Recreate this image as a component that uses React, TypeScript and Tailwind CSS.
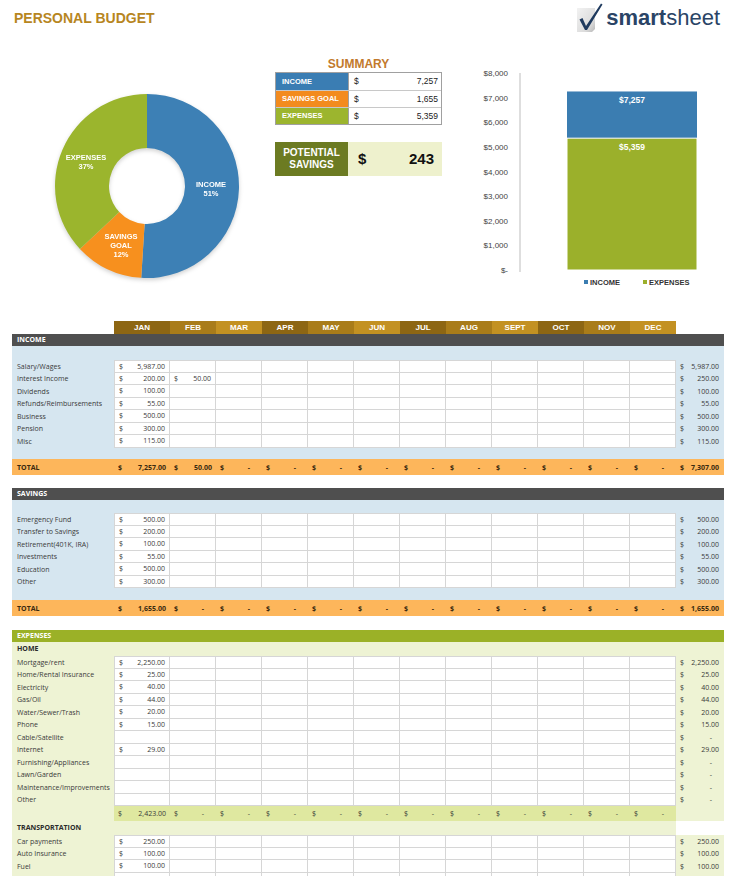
import React from "react";

type Row = [string, string | null, string | null, string | null];

const MONTHS = ["JAN", "FEB", "MAR", "APR", "MAY", "JUN", "JUL", "AUG", "SEPT", "OCT", "NOV", "DEC"];
const MONTH_BG = [
  "bg-[#8d6613]", "bg-[#a97c1a]", "bg-[#c39122]",
  "bg-[#8d6613]", "bg-[#a97c1a]", "bg-[#c39122]",
  "bg-[#8d6613]", "bg-[#a97c1a]", "bg-[#c39122]",
  "bg-[#8d6613]", "bg-[#a97c1a]", "bg-[#c39122]",
];

const GRID = "grid grid-cols-[102px_56px_repeat(11,46px)_48px]";

const income: Row[] = [
  ["Salary/Wages", "5,987.00", null, "5,987.00"],
  ["Interest Income", "200.00", "50.00", "250.00"],
  ["Dividends", "100.00", null, "100.00"],
  ["Refunds/Reimbursements", "55.00", null, "55.00"],
  ["Business", "500.00", null, "500.00"],
  ["Pension", "300.00", null, "300.00"],
  ["Misc", "115.00", null, "115.00"],
];

const savings: Row[] = [
  ["Emergency Fund", "500.00", null, "500.00"],
  ["Transfer to Savings", "200.00", null, "200.00"],
  ["Retirement(401K, IRA)", "100.00", null, "100.00"],
  ["Investments", "55.00", null, "55.00"],
  ["Education", "500.00", null, "500.00"],
  ["Other", "300.00", null, "300.00"],
];

const home: Row[] = [
  ["Mortgage/rent", "2,250.00", null, "2,250.00"],
  ["Home/Rental Insurance", "25.00", null, "25.00"],
  ["Electricity", "40.00", null, "40.00"],
  ["Gas/Oil", "44.00", null, "44.00"],
  ["Water/Sewer/Trash", "20.00", null, "20.00"],
  ["Phone", "15.00", null, "15.00"],
  ["Cable/Satellite", null, null, "-"],
  ["Internet", "29.00", null, "29.00"],
  ["Furnishing/Appliances", null, null, "-"],
  ["Lawn/Garden", null, null, "-"],
  ["Maintenance/Improvements", null, null, "-"],
  ["Other", null, null, "-"],
];

const transport: Row[] = [
  ["Car payments", "250.00", null, "250.00"],
  ["Auto Insurance", "100.00", null, "100.00"],
  ["Fuel", "100.00", null, "100.00"],
  ["", null, null, null],
];

function Money({ v, right }: { v: string; right?: boolean }) {
  const pr = v === "-" ? "pr-[12px]" : right ? "pr-[5px]" : "pr-[4px]";
  return (
    <div className={`flex h-full items-center justify-between pl-[4px] ${pr}`}>
      <span>$</span>
      <span>{v}</span>
    </div>
  );
}

function DataRow({ row, first, totalBg }: { row: Row; first?: boolean; totalBg?: string }) {
  const [label, jan, feb, total] = row;
  const vals = [jan, feb, null, null, null, null, null, null, null, null, null, null];
  return (
    <div className={`${GRID} h-[12.5px] text-[7px] leading-none text-[#3a3a3a]`}>
      <div className="flex items-center whitespace-nowrap pl-[5px]">{label}</div>
      {vals.map((v, i) => (
        <div
          key={i}
          className={`border-b border-r border-[#d6d6d6] bg-white ${first ? "border-t" : ""} ${i === 0 ? "border-l" : ""}`}
        >
          {v && <Money v={v} />}
        </div>
      ))}
      <div className={totalBg ?? ""}>{total && <Money v={total} right />}</div>
    </div>
  );
}

function TotalRow({ jan, feb, total }: { jan: string; feb: string; total: string }) {
  const vals = [jan, feb, "-", "-", "-", "-", "-", "-", "-", "-", "-", "-"];
  return (
    <div className={`${GRID} h-[16px] bg-[#fdb65b] text-[7px] font-bold leading-none text-[#3a2a10]`}>
      <div className="flex items-center pl-[5px]">TOTAL</div>
      {vals.map((v, i) => (
        <Money key={i} v={v} />
      ))}
      <Money v={total} right />
    </div>
  );
}

function SectionBar({ title, bg }: { title: string; bg: string }) {
  return (
    <div className={`flex h-[12px] items-center pl-[5px] text-[7px] font-bold text-white ${bg}`}>{title}</div>
  );
}

function arcPath(cx: number, cy: number, r: number, ri: number, a0: number, a1: number) {
  const rad = (a: number) => ((a - 90) * Math.PI) / 180;
  const p = (rr: number, a: number) => [cx + rr * Math.cos(rad(a)), cy + rr * Math.sin(rad(a))];
  const [x0, y0] = p(r, a0);
  const [x1, y1] = p(r, a1);
  const [x2, y2] = p(ri, a1);
  const [x3, y3] = p(ri, a0);
  const large = a1 - a0 > 180 ? 1 : 0;
  return `M${x0} ${y0} A${r} ${r} 0 ${large} 1 ${x1} ${y1} L${x2} ${y2} A${ri} ${ri} 0 ${large} 0 ${x3} ${y3} Z`;
}

function Donut() {
  return (
    <svg width="196" height="196" viewBox="0 0 196 196" className="drop-shadow-[0_2px_2px_rgba(0,0,0,0.18)]">
      <path d={arcPath(98, 98, 92, 38, 0, 183.6)} fill="#3d80b5" />
      <path d={arcPath(98, 98, 92, 38, 183.6, 226.8)} fill="#f7901e" />
      <path d={arcPath(98, 98, 92, 38, 226.8, 360)} fill="#9bb52d" />
      <g fill="#fff" fontSize="7.5" fontWeight="700" textAnchor="middle" fontFamily="Liberation Sans, Arial, sans-serif">
        <text x="37" y="72">EXPENSES</text>
        <text x="37" y="81">37%</text>
        <text x="162" y="99">INCOME</text>
        <text x="162" y="108">51%</text>
        <text x="72" y="151">SAVINGS</text>
        <text x="72" y="160">GOAL</text>
        <text x="72" y="169">12%</text>
      </g>
    </svg>
  );
}

function BarChart() {
  const y = (v: number) => 210 - v * 0.0246;
  const ticks = [8000, 7000, 6000, 5000, 4000, 3000, 2000, 1000, 0];
  return (
    <svg width="266" height="235" viewBox="0 0 266 235" fontFamily="Liberation Sans, Arial, sans-serif">
      <g fontSize="8" fill="#444" textAnchor="end">
        {ticks.map((t) => (
          <text key={t} x="38" y={y(t) + 3}>
            {t === 0 ? "$-" : `$${t.toLocaleString("en-US")}`}
          </text>
        ))}
      </g>
      <line x1="50" y1="13" x2="50" y2="212" stroke="#bdbdbd" strokeWidth="1" />
      <rect x="97" y={y(7257)} width="130" height={210 - y(7257)} fill="#3b7db1" />
      <rect x="97" y={y(5359)} width="130" height={210 - y(5359)} fill="#9bb02b" stroke="#fff" strokeWidth="1" />
      <g fill="#fff" fontSize="8.5" fontWeight="700" textAnchor="middle">
        <text x="162" y="43">$7,257</text>
        <text x="162" y="90">$5,359</text>
      </g>
      <rect x="114" y="220" width="4" height="4" fill="#3b7db1" />
      <text x="120" y="225" fontSize="7.5" fontWeight="700" fill="#333">INCOME</text>
      <rect x="173" y="220" width="4" height="4" fill="#9bb02b" />
      <text x="179" y="225" fontSize="7.5" fontWeight="700" fill="#333">EXPENSES</text>
    </svg>
  );
}

function Logo() {
  return (
    <div className="flex items-center gap-[2px]">
      <svg width="28" height="32" viewBox="0 0 28 32">
        <defs>
          <linearGradient id="lg" x1="0" y1="0" x2="1" y2="1">
            <stop offset="0" stopColor="#f2f2f2" />
            <stop offset="0.7" stopColor="#dcdcdc" />
            <stop offset="1" stopColor="#b8b8b8" />
          </linearGradient>
        </defs>
        <path d="M1 6 H19 V27 L16 30 H1 Z" fill="url(#lg)" />
        <path d="M3.5 17.5 L6.5 16 L10 24 L25 1.5 L26.5 2.5 L11 28 L9 28 Z" fill="#1f3a5e" />
      </svg>
      <div className="font-['Liberation_Sans',Arial,sans-serif] text-[22px] leading-none text-[#2a4466]">
        <span className="font-bold">smart</span>
        <span>sheet</span>
      </div>
    </div>
  );
}

function Summary() {
  const rows = [
    ["INCOME", "7,257", "bg-[#3a7db3]"],
    ["SAVINGS GOAL", "1,655", "bg-[#f38b1e]"],
    ["EXPENSES", "5,359", "bg-[#9cb52e]"],
  ];
  return (
    <div className="mt-[5px] w-[167px] font-['Liberation_Sans',Arial,sans-serif]">
      <div className="text-center text-[12px] font-bold leading-[15px] text-[#c27a2c]">SUMMARY</div>
      <div className="border border-[#a0a0a0]">
        {rows.map(([label, val, bg], i) => (
          <div key={label} className={`grid h-[17px] grid-cols-[72px_1fr] ${i > 0 ? "border-t border-[#c8c8c8]" : ""}`}>
            <div className={`flex items-center pl-[6px] text-[7.5px] font-bold text-white ${bg}`}>{label}</div>
            <div className="flex items-center justify-between border-l border-[#a0a0a0] bg-white pl-[5px] pr-[3px] text-[8.5px] text-[#222]">
              <span>$</span>
              <span>{val}</span>
            </div>
          </div>
        ))}
      </div>
      <div className="mt-[17px] grid h-[34px] grid-cols-[73px_1fr]">
        <div className="flex items-center justify-center bg-[#6c7b22] text-center text-[10px] font-bold leading-[12px] text-white">
          POTENTIAL
          <br />
          SAVINGS
        </div>
        <div className="flex items-center justify-between bg-[#eef1cd] pl-[10px] pr-[8px] text-[15px] font-bold text-[#111]">
          <span>$</span>
          <span>243</span>
        </div>
      </div>
    </div>
  );
}

export default function App() {
  return (
    <div className="relative h-[876px] w-[736px] overflow-hidden bg-white font-['Open_Sans',Arial,sans-serif]">
      {/* header */}
      <div className="flex h-[40px] items-start justify-between">
        <div className="pl-[14px] pt-[11px] font-['Liberation_Sans',Arial,sans-serif] text-[14px] font-bold leading-none text-[#b7861f]">
          PERSONAL BUDGET
        </div>
        <div className="pr-[16px] pt-[2px]">
          <Logo />
        </div>
      </div>

      {/* charts + summary */}
      <div className="flex h-[281px] items-start">
        <div className="ml-[49px] mt-[48px]">
          <Donut />
        </div>
        <div className="ml-[30px] mt-[12px]">
          <Summary />
        </div>
        <div className="ml-[28px] mt-[20px]">
          <BarChart />
        </div>
      </div>

      {/* table */}
      <div className="ml-[12px] w-[712px]">
        <div className={`${GRID} h-[13px]`}>
          <div />
          {MONTHS.map((m, i) => (
            <div
              key={m}
              className={`flex items-center justify-center font-['Liberation_Sans',Arial,sans-serif] text-[8px] font-bold text-white ${MONTH_BG[i]}`}
            >
              {m}
            </div>
          ))}
          <div />
        </div>

        <SectionBar title="INCOME" bg="bg-[#4f4f4f]" />
        <div className="bg-[#d6e6f0] pb-[11.5px] pt-[14px]">
          {income.map((r, i) => (
            <DataRow key={r[0]} row={r} first={i === 0} />
          ))}
        </div>
        <TotalRow jan="7,257.00" feb="50.00" total="7,307.00" />

        <div className="mt-[13px]">
          <SectionBar title="SAVINGS" bg="bg-[#4f4f4f]" />
        </div>
        <div className="bg-[#d6e6f0] pb-[12px] pt-[13px]">
          {savings.map((r, i) => (
            <DataRow key={r[0]} row={r} first={i === 0} />
          ))}
        </div>
        <TotalRow jan="1,655.00" feb="-" total="1,655.00" />

        <div className="mt-[14px]">
          <SectionBar title="EXPENSES" bg="bg-[#9bb127]" />
        </div>
        <div className="bg-[#eef3d4]">
          <div className="flex h-[14px] items-center pl-[5px] text-[7px] font-bold text-[#2b2b2b]">HOME</div>
          {home.map((r, i) => (
            <DataRow key={r[0]} row={r} first={i === 0} />
          ))}
          <div className={`${GRID} h-[15px] text-[7px] leading-none text-[#3a3a3a]`}>
            <div />
            {["2,423.00", "-", "-", "-", "-", "-", "-", "-", "-", "-", "-", "-"].map((v, i) => (
              <div key={i} className="bg-[#dfe8a0]">
                <Money v={v} />
              </div>
            ))}
            <div />
          </div>
          <div className={`${GRID} h-[14px]`}>
            <div className="col-span-13 flex items-center pl-[5px] text-[7px] font-bold text-[#2b2b2b]">
              TRANSPORTATION
            </div>
            <div className="bg-white" />
          </div>
          {transport.map((r, i) => (
            <DataRow key={i} row={r} first={i === 0} />
          ))}
        </div>
      </div>
    </div>
  );
}
